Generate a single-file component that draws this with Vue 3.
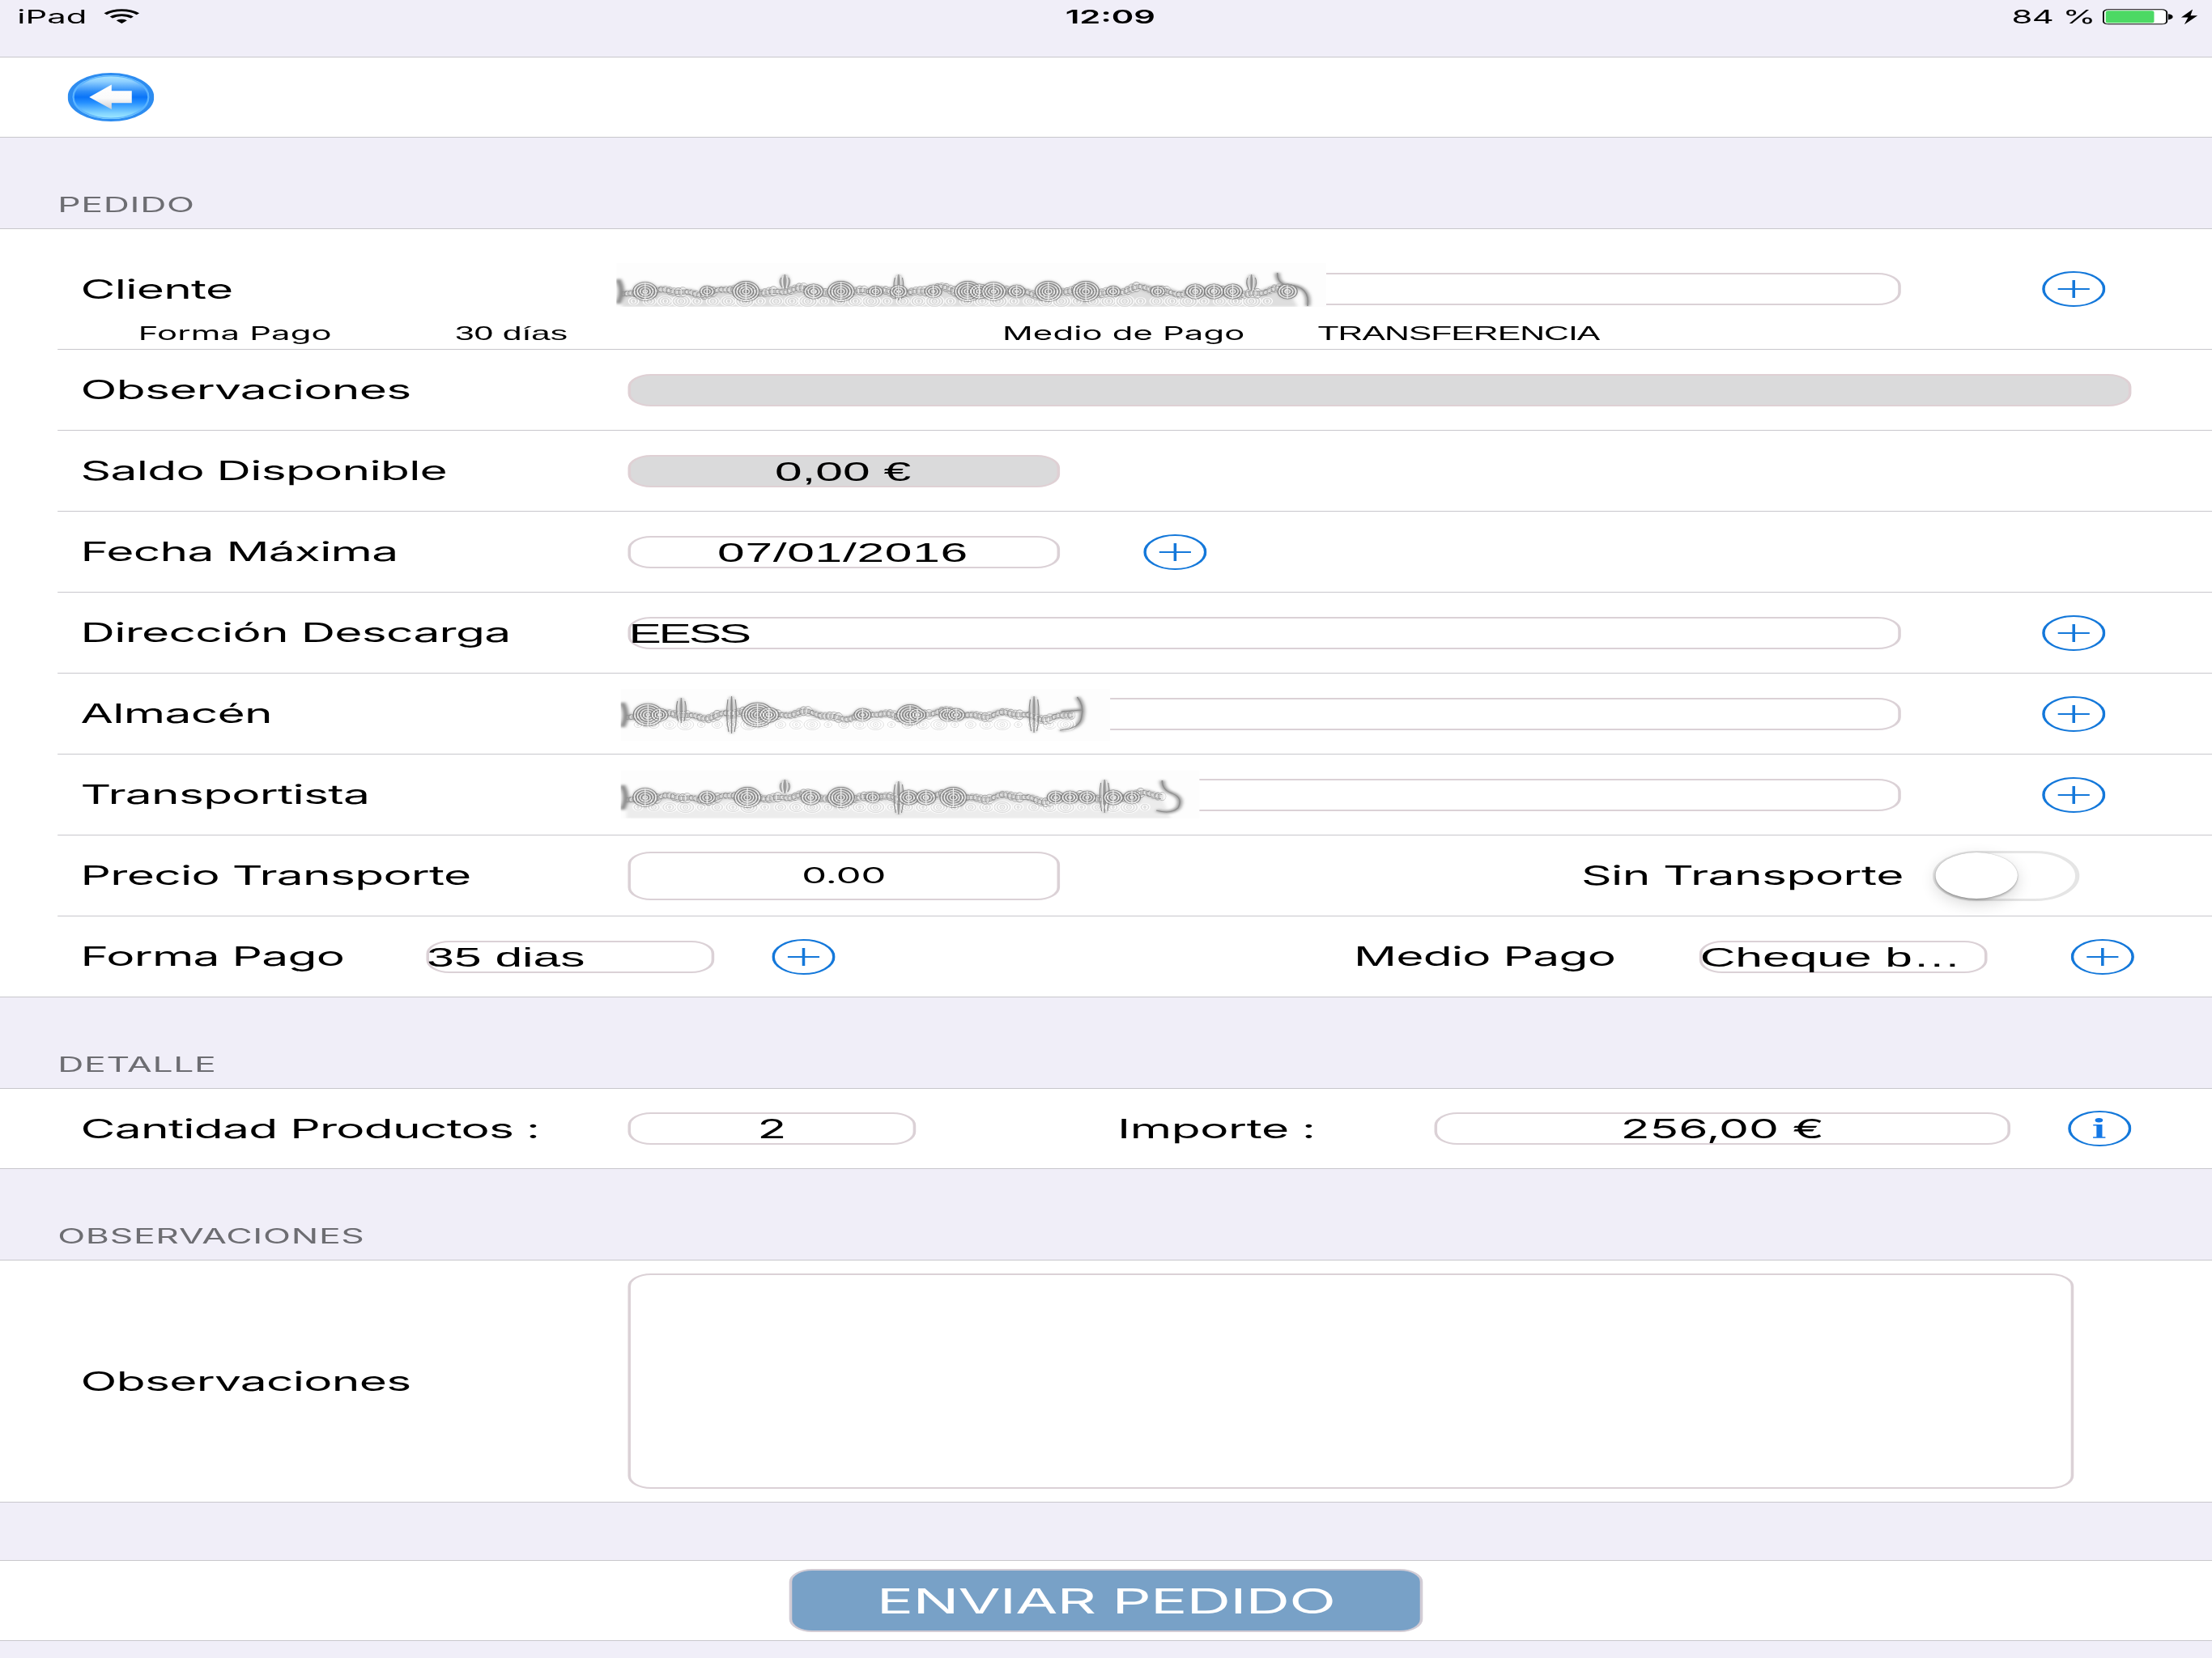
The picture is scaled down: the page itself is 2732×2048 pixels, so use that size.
<template>
  <div class="screen">
    <header class="status-bar">
      <div class="status-left">
        <span class="device">iPad</span>
        <svg class="wifi" viewBox="0 0 25 18" aria-hidden="true">
          <path d="M1.2 6.2a16.5 16.5 0 0 1 22.6 0" fill="none" stroke="#000" stroke-width="2.8" />
          <path d="M5.2 10.6a10.6 10.6 0 0 1 14.6 0" fill="none" stroke="#000" stroke-width="2.7" />
          <path d="M8.8 14.2a5.4 5.4 0 0 1 7.4 0L12.5 18z" fill="#000" />
        </svg>
      </div>
      <span class="clock">12:09</span>
      <div class="status-right">
        <span class="percent">84 %</span>
        <svg class="battery" viewBox="0 0 67 20" aria-hidden="true">
          <rect x="0.6" y="0.8" width="44" height="18" rx="3.4" fill="#fff" stroke="#000" stroke-width="1.1" />
          <rect x="2.2" y="2.3" width="33.6" height="15" rx="1.6" fill="#4cd964" />
          <path d="M45.6 6.2q3.2 0.8 3.2 3.6t-3.2 3.6z" fill="#000" />
          <path d="M62.6 0.4L54.6 10.6h4.8l-2.6 8.6L66 8.2h-4.9z" fill="#000" />
        </svg>
      </div>
    </header>

    <nav class="nav-cell">
      <svg class="back" viewBox="0 0 62 62" role="button">
        <defs>
          <linearGradient id="glossTop" x1="0" y1="0" x2="0" y2="1">
            <stop offset="0" stop-color="#b4ecff" />
            <stop offset="0.16" stop-color="#8fd0ff" />
            <stop offset="0.38" stop-color="#2c8cf8" />
            <stop offset="0.5" stop-color="#0a74f8" />
            <stop offset="0.62" stop-color="#2590ff" />
            <stop offset="0.85" stop-color="#82d4ff" />
            <stop offset="1" stop-color="#a9f0ff" />
          </linearGradient>
          <linearGradient id="arrowFill" x1="0" y1="0" x2="0" y2="1">
            <stop offset="0" stop-color="#fff" />
            <stop offset="0.55" stop-color="#fbfbfb" />
            <stop offset="1" stop-color="#cfcfd4" />
          </linearGradient>
        </defs>
        <circle cx="31" cy="31" r="29.5" fill="url(#glossTop)" stroke="#2d8cf0" stroke-width="3" />
        <circle cx="31" cy="31" r="27" fill="none" stroke="#5bb4ff" stroke-width="1.4" />
        <path d="M15.5 31L31.5 15v8h14.5V38.5h-14.5v8z" fill="url(#arrowFill)" />
      </svg>
    </nav>

    <h2 class="section-title">PEDIDO</h2>
    <section class="group">
      <div class="row row-cliente">
        <div class="line">
          <label class="label l-cliente">Cliente</label>
          <div class="field w-long">
            <svg class="scribble s-cliente" viewBox="0 0 493 54" v-html="cliente"></svg>
          </div>
          <span class="spacer s98"></span>
          <svg class="round" viewBox="0 0 44 44"><circle cx="22" cy="22" r="21" /><path d="M11 22h22M22 11v22" /></svg>
        </div>
        <div class="subline">
          <span class="sub sub-forma">Forma Pago</span>
          <span class="sub helv sub-dias">30 días</span>
          <span class="sub sub-medio">Medio de Pago</span>
          <span class="sub helv sub-transf">TRANSFERENCIA</span>
        </div>
      </div>
      <div class="row">
        <label class="label">Observaciones</label>
        <div class="field disabled w-full"></div>
      </div>
      <div class="row">
        <label class="label">Saldo Disponible</label>
        <div class="field disabled center">0,00 €</div>
      </div>
      <div class="row">
        <label class="label">Fecha Máxima</label>
        <div class="field center date">07/01/2016</div>
        <span class="spacer s58"></span>
        <svg class="round" viewBox="0 0 44 44"><circle cx="22" cy="22" r="21" /><path d="M11 22h22M22 11v22" /></svg>
      </div>
      <div v-for="item in lookups" :key="item.label" class="row">
        <label class="label">{{ item.label }}</label>
        <div class="field w-long lookup">
          {{ item.value }}
          <svg v-if="item.scribble" :class="['scribble', item.css]" :viewBox="item.box" v-html="item.scribble"></svg>
        </div>
        <span class="spacer s98"></span>
        <svg class="round" viewBox="0 0 44 44"><circle cx="22" cy="22" r="21" /><path d="M11 22h22M22 11v22" /></svg>
      </div>
      <div class="row">
        <label class="label">Precio Transporte</label>
        <div class="field tall center">0.00</div>
        <label class="label label-sin">Sin Transporte</label>
        <div class="switch"><div class="thumb"></div></div>
      </div>
      <div class="row last">
        <label class="label label-forma">Forma Pago</label>
        <div class="field w-small">35 dias</div>
        <span class="spacer s40"></span>
        <svg class="round" viewBox="0 0 44 44"><circle cx="22" cy="22" r="21" /><path d="M11 22h22M22 11v22" /></svg>
        <label class="label label-medio">Medio Pago</label>
        <div class="field w-small">Cheque b…</div>
        <span class="spacer s58"></span>
        <svg class="round" viewBox="0 0 44 44"><circle cx="22" cy="22" r="21" /><path d="M11 22h22M22 11v22" /></svg>
      </div>
    </section>

    <h2 class="section-title">DETALLE</h2>
    <section class="group">
      <div class="row last row-detalle">
        <label class="label">Cantidad Productos :</label>
        <div class="field w-small center inter">2</div>
        <label class="label label-importe">Importe :</label>
        <div class="field w-importe center inter">256,00 €</div>
        <span class="spacer s40"></span>
        <svg class="round" viewBox="0 0 44 44">
          <circle cx="22" cy="22" r="21" />
          <circle class="solid" cx="21.5" cy="11.8" r="2.7" />
          <path class="solid" d="M17.5 17h6.3v15.2h2.2v1.6h-8.6v-1.6h2.4V18.6h-2.3z" />
        </svg>
      </div>
    </section>

    <h2 class="section-title">OBSERVACIONES</h2>
    <section class="group">
      <div class="row last row-notes">
        <label class="label">Observaciones</label>
        <div class="field notes"></div>
      </div>
    </section>

    <section class="group submit-group">
      <button class="submit">ENVIAR PEDIDO</button>
    </section>
  </div>
</template>

<script setup>
// Scribbles hide the private values: a wavy trace with dense rings on top.
function scribble(id, w, h, cy, rings, bars, hook, wash) {
  const wave = (x) => cy + Math.sin(x / 7.5) * 3 + Math.sin(x / 3.1 + 1) * 1.6 + Math.sin(x / 21) * 1.6;
  const trace = (off) => {
    let d = "";
    for (let x = 4; x < w - 24; x += 2) {
      d += `${d ? "L" : "M"}${x} ${(wave(x) + off).toFixed(1)}`;
    }
    return d;
  };
  const ring = (x, y, rx, ry, color, sw = 0.6) =>
    `<ellipse cx="${x}" cy="${y.toFixed(1)}" rx="${rx.toFixed(1)}" ry="${ry.toFixed(1)}" fill="none" stroke="${color}" stroke-width="${sw}"/>`;

  let out = `<defs><filter id="${id}" x="-5%" y="-30%" width="110%" height="160%"><feGaussianBlur stdDeviation="1.3 1.8"/></filter></defs>`;
  out += `<rect width="${w}" height="${h}" fill="#fdfdfd"/>`;

  // soft shadow below everything
  out += `<g filter="url(#${id})">`;
  if (wash) {
    out += `<path d="${trace(2)}L${w - 20} ${h}L4 ${h}z" fill="${wash}"/>`;
  }
  out += `<path d="${trace(0)}" fill="none" stroke="#c2c2c2" stroke-width="8"/>`;
  rings.forEach(([x, r]) => {
    out += `<ellipse cx="${x}" cy="${cy}" rx="${r * 0.85}" ry="${r * 1.2}" fill="#adadad"/>`;
  });
  bars.forEach(([x, y1, y2]) => {
    out += `<ellipse cx="${x}" cy="${(y1 + y2) / 2}" rx="3.4" ry="${(y2 - y1) / 2}" fill="#ababab"/>`;
  });
  out += `<path d="M1 ${cy - 15}Q6 ${cy} 1 ${cy + 15}" fill="none" stroke="#8a8a8a" stroke-width="4"/>`;
  out += `<path d="${hook}" fill="none" stroke="#999" stroke-width="3.5"/>`;
  out += "</g>";

  // faint arcs under the trace
  for (let x = 12; x < w - 30; x += 11) {
    const r = 3.5 + ((x * 7) % 4);
    for (let k = 0; k < r; k += 2) {
      out += ring(x, cy + 12, r - k, r + 1 - k, "#fff", 0.7);
      out += ring(x, cy + 12, r - k - 0.8 > 0 ? r - k - 0.8 : 0.4, r - k, "#d4d4d4", 0.5);
    }
  }
  // small ripples along the trace
  for (let x = 7; x < w - 24; x += 3) {
    const r = 2.2 + ((x * 5) % 7) * 0.35;
    out += ring(x, wave(x), r * 0.7, r * 1.4, x % 2 ? "#858585" : "#a2a2a2", 0.5);
    out += ring(x + 0.8, wave(x), r * 0.45, r, "#fff", 0.5);
  }
  out += `<path d="${trace(-2.4)}" fill="none" stroke="#888" stroke-width="0.7" stroke-dasharray="3 0.8 1.4 0.6"/>`;
  out += `<path d="${trace(2.6)}" fill="none" stroke="#888" stroke-width="0.7" stroke-dasharray="2 0.8 4 0.6"/>`;
  bars.forEach(([x, y1, y2]) => {
    for (let k = -2; k <= 2; k++) {
      out += `<path d="M${x + k * 1.3} ${y1 + Math.abs(k) * 2}Q${x + k * 2.2} ${(y1 + y2) / 2} ${x + k} ${y2 - Math.abs(k)}" fill="none" stroke="${k % 2 ? "#f2f2f2" : "#888"}" stroke-width="0.6"/>`;
    }
  });
  rings.forEach(([x, r]) => {
    let light = false;
    for (let k = r * 0.85; k > 0.8; k -= 1) {
      out += ring(x, cy, k, k * 1.35, light ? "#f4f4f4" : "#7e7e7e", 0.6);
      light = !light;
    }
    out += `<path d="M${x} ${cy - r * 1.1}V${cy + r * 1.1}" stroke="#ededed" stroke-width="0.7"/>`;
  });
  out += `<path d="${hook}" fill="none" stroke="#8e8e8e" stroke-width="0.9"/>`;
  return out;
}

const cliente = scribble(
  "soft-cliente", 493, 54, 35,
  [[20, 10], [63, 6], [90, 11], [137, 8], [156, 11], [180, 6], [196, 7], [220, 7], [244, 11], [252, 8], [262, 10], [278, 7], [300, 11], [326, 11], [345, 6], [376, 6], [402, 8], [415, 8], [428, 8], [466, 8]],
  [[117, 14, 32], [196, 14, 46], [441, 14, 34]],
  "M459 12Q459 27 467 27Q482 29 480 53",
  "#dedede"
);

const lookups = [
  { label: "Dirección Descarga", value: "EESS" },
  {
    label: "Almacén",
    box: "0 0 340 64",
    css: "s-almacen",
    scribble: scribble(
      "soft-almacen", 340, 64, 32,
      [[19, 12], [27, 7], [95, 13], [103, 8], [168, 7], [201, 11], [206, 7], [227, 7], [233, 7]],
      [[42, 11, 42], [77, 9, 55], [287, 9, 54]],
      "M317 10Q322 20 320 35Q319 49 305 51M306 28L320 26",
      ""
    ),
  },
  {
    label: "Transportista",
    box: "0 0 402 59",
    css: "s-transportista",
    scribble: scribble(
      "soft-transportista", 402, 59, 33,
      [[17, 10], [60, 7], [88, 11], [132, 8], [153, 11], [175, 6], [200, 8], [212, 8], [231, 11], [302, 7], [312, 7], [324, 7], [342, 8], [355, 7]],
      [[114, 11, 28], [193, 13, 54], [336, 11, 52]],
      "M376 12Q376 24 383 28Q391 34 387 46Q382 54 372 49",
      "#ececec"
    ),
  },
];
</script>

<style>
html,
body {
  background: #f0eef8;
  overflow: hidden;
}
</style>

<style scoped>
/* The form is a 1536px portrait layout stretched to the landscape width. */
.screen {
  width: 1536px;
  height: 2048px;
  transform: scaleX(1.778646);
  transform-origin: 0 0;
  background: #f0eef8;
  color: #000;
  font-family: Inter, "Liberation Sans", sans-serif;
  font-size: 33px;
  overflow: hidden;
}

.status-bar {
  display: flex;
  justify-content: space-between;
  height: 70px;
  padding: 0 9px 0 12px;
  box-sizing: border-box;
  font-size: 23.5px;
  line-height: 41px;
}

.status-left,
.status-right {
  display: flex;
  flex: 1;
}

.status-right {
  justify-content: flex-end;
}

.wifi {
  width: 25px;
  height: 18px;
  margin: 11px 0 0 12px;
}

.clock {
  padding-left: 3px;
  font-weight: 600;
}

.percent {
  letter-spacing: -0.3px;
}

.battery {
  width: 67px;
  height: 20px;
  margin: 10.5px 0 0 5px;
}

.nav-cell {
  display: flex;
  align-items: center;
  height: 98px;
  padding-left: 46.5px;
  background: #fff;
  border-top: 1px solid #c8c7cc;
  border-bottom: 1px solid #c8c7cc;
}

.back {
  width: 60px;
  height: 60px;
}

.section-title {
  display: flex;
  align-items: flex-end;
  height: 112px;
  margin: 0;
  padding: 0 0 13px 40px;
  box-sizing: border-box;
  color: #6d6d72;
  font-size: 25px;
  font-weight: 400;
  letter-spacing: 0.4px;
  line-height: 32px;
}

.group {
  background: #fff;
  border-top: 1px solid #c8c7cc;
  border-bottom: 1px solid #c8c7cc;
}

.row {
  display: flex;
  align-items: center;
  height: 100px;
  margin-left: 40px;
  padding-left: 16px;
  box-sizing: border-box;
  border-bottom: 1px solid #c8c7cc;
}

.row.last {
  height: 99px;
  border-bottom: 0;
}

.row-cliente {
  display: block;
  height: 149px;
  padding-top: 52px;
}

.line {
  display: flex;
  align-items: center;
  height: 44px;
}

.subline {
  display: flex;
  height: 52px;
  padding-left: 40px;
  font-size: 23.5px;
  letter-spacing: 0.1px;
  line-height: 65px;
  white-space: nowrap;
}

.helv {
  font-family: "Liberation Sans", Arial, sans-serif;
  font-size: 24px;
  letter-spacing: -0.1px;
  line-height: 66px;
}

.sub-forma {
  width: 220px;
}

.sub-dias {
  width: 380px;
}

.sub-medio {
  width: 219px;
}

.sub-transf {
  letter-spacing: -0.55px;
}

.label {
  flex: none;
  width: 380px;
  padding-bottom: 1px;
  letter-spacing: -0.42px;
  white-space: nowrap;
}

.label-sin {
  width: 244px;
  margin-left: 362px;
  letter-spacing: -0.3px;
}

.label-forma {
  width: 240px;
}

.label-medio {
  width: 240px;
  margin-left: 360px;
}

.label-importe {
  width: 220px;
  margin-left: 140px;
  letter-spacing: -0.2px;
}

.field {
  position: relative;
  flex: none;
  width: 300px;
  height: 40px;
  box-sizing: border-box;
  border: 2px solid #dbd1d6;
  border-radius: 16px;
  font-family: "Liberation Sans", Arial, sans-serif;
  font-size: 34px;
  line-height: 37px;
  text-indent: -1.5px;
  white-space: nowrap;
}

.lookup {
  letter-spacing: -1.8px;
}

.center {
  text-align: center;
}

.date {
  letter-spacing: 0.4px;
}

.disabled {
  background: #dadadb;
  border-color: #dfd0d4;
}

.inter {
  font-family: Inter, "Liberation Sans", sans-serif;
  font-size: 33px;
  line-height: 36px;
  text-indent: 0;
}

.w-long {
  width: 884px;
}

.w-full {
  width: 1044px;
}

.w-small {
  width: 200px;
}

.w-importe {
  width: 400px;
}

.tall {
  height: 60px;
  font-family: Inter, "Liberation Sans", sans-serif;
  font-size: 27.5px;
  line-height: 55px;
  text-indent: 0;
}

.notes {
  width: 1004px;
  height: 266px;
}

.spacer {
  flex: none;
}

.s40 {
  width: 40px;
}

.s58 {
  width: 58px;
}

.s98 {
  width: 98px;
}

.round {
  flex: none;
  width: 44px;
  height: 44px;
  fill: none;
  stroke: #1478da;
  stroke-width: 2;
}

.round .solid {
  fill: #1478e6;
  stroke: none;
}

/* Covers the start of the field, border included */
.scribble {
  position: absolute;
}

.s-cliente {
  left: -10px;
  top: -14px;
  width: 493px;
  height: 54px;
}

.s-almacen {
  left: -7px;
  top: -13px;
  width: 340px;
  height: 64px;
}

.s-transportista {
  left: -7px;
  top: -12px;
  width: 402px;
  height: 59px;
}

.switch {
  width: 102px;
  height: 62px;
  box-sizing: border-box;
  border: 3px solid #e5e5e5;
  border-radius: 31px;
  background: #fff;
}

.thumb {
  width: 57px;
  height: 57px;
  margin: -0.5px 0 0 -1px;
  border-radius: 50%;
  background: #fff;
  box-shadow: 0 6px 14px rgba(0, 0, 0, 0.16), 0 2px 2px rgba(0, 0, 0, 0.22), 0 0 1px rgba(0, 0, 0, 0.3);
}

.row.row-detalle {
  height: 98px;
}

.row.row-notes {
  height: 298px;
}

.submit-group {
  display: flex;
  align-items: center;
  justify-content: center;
  height: 98px;
  margin-top: 71px;
}

.submit {
  width: 440px;
  height: 78px;
  padding: 0;
  border: 2px solid #d2ccd5;
  border-radius: 16px;
  background: #78a1c7;
  color: #fff;
  font-family: inherit;
  font-size: 42.5px;
  letter-spacing: -0.5px;
  line-height: 75px;
}
</style>
